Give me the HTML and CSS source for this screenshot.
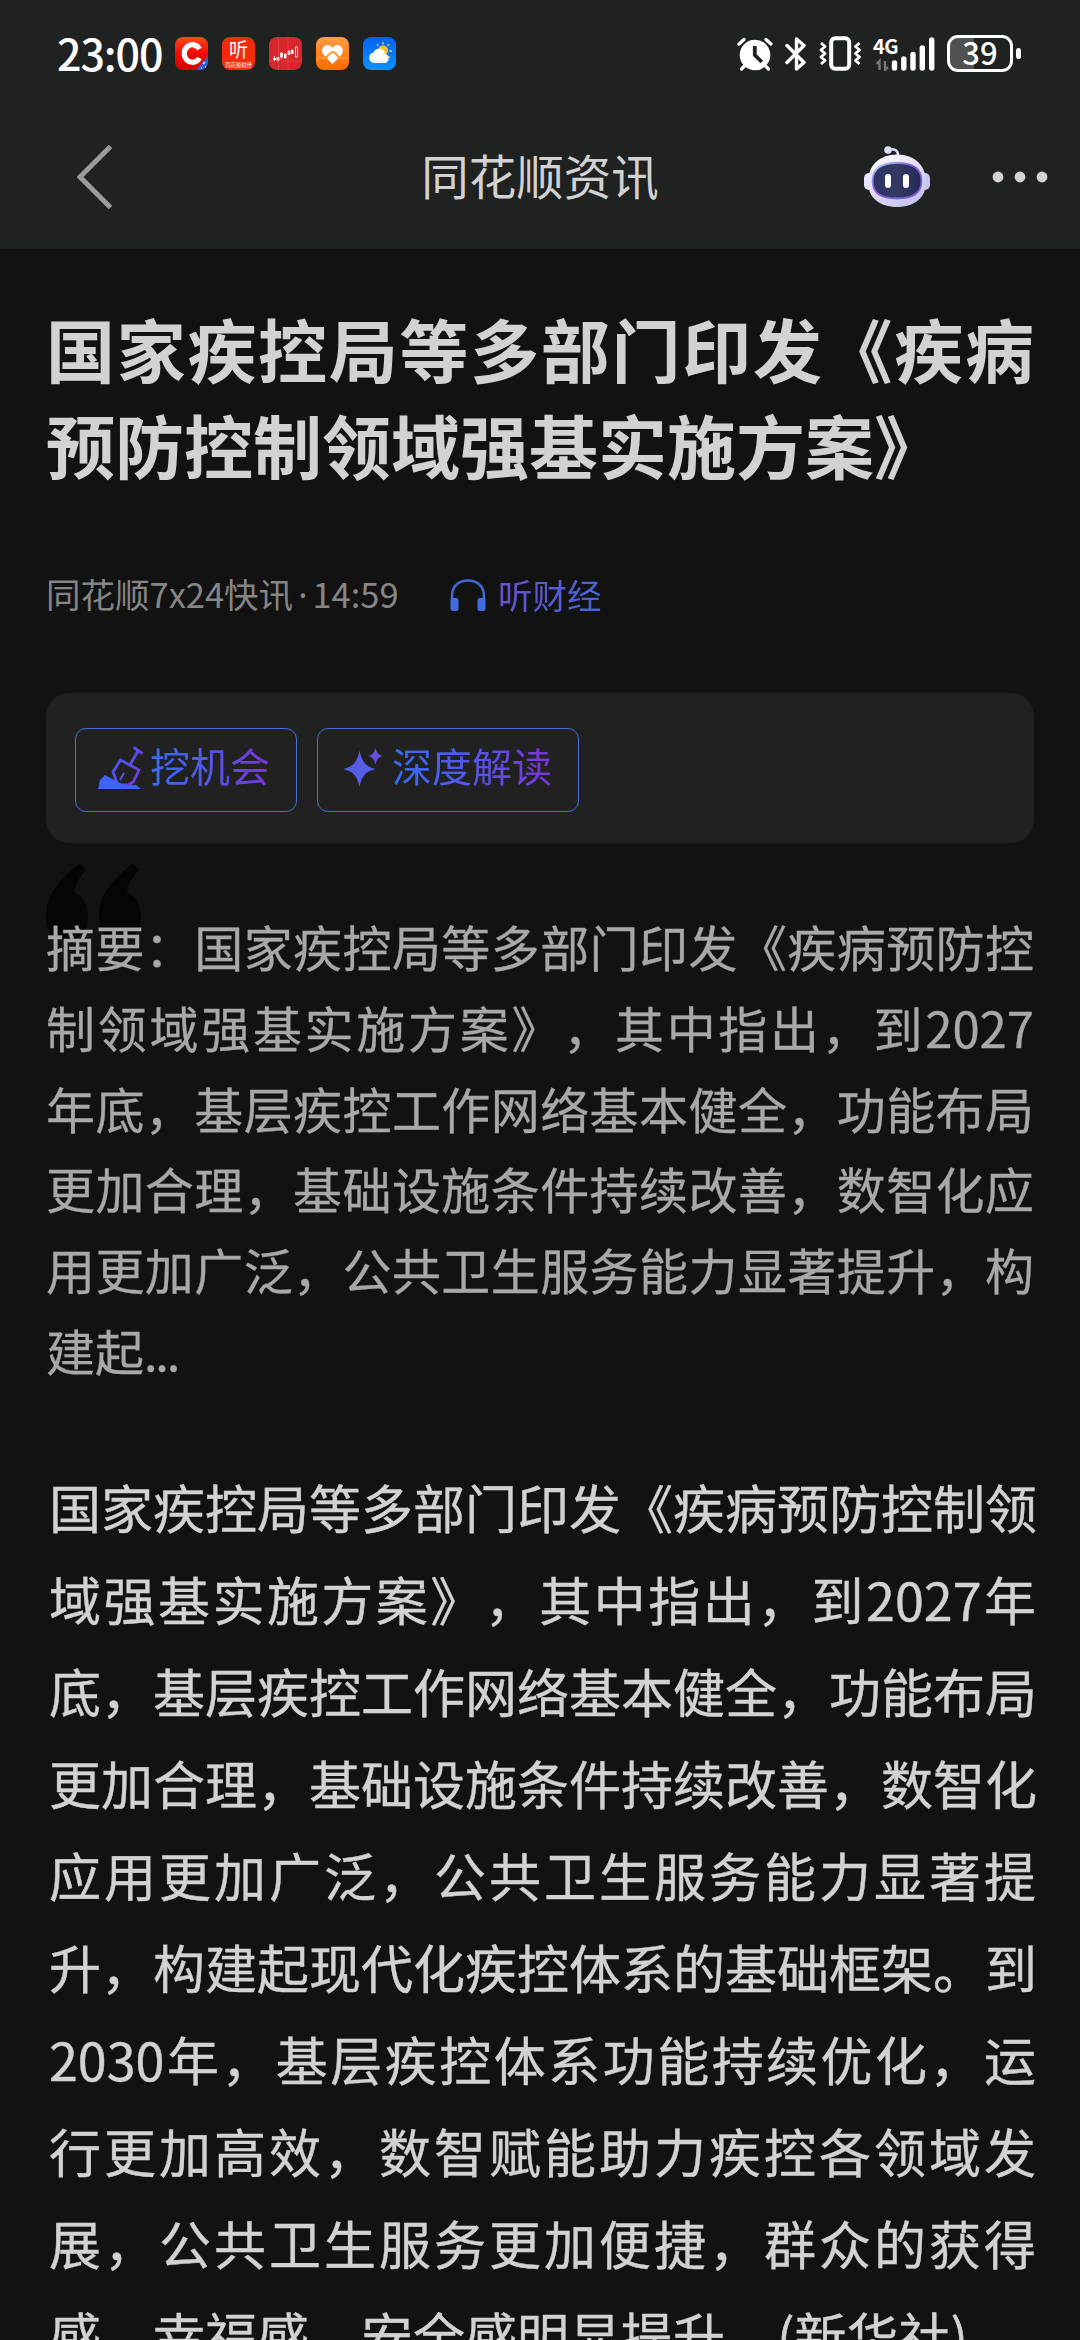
FILE: index.html
```html
<!DOCTYPE html>
<html lang="zh-CN">
<head>
    <meta charset="UTF-8">
    <meta name="viewport" content="width=device-width, initial-scale=1.0">
    <title>同花顺资讯</title>
    <link rel="stylesheet" href="styles.css">
</head>
<body>
    <header class="header">
        <div class="status-bar">
            <span class="time">23:00</span>
            <div class="apps">
                <svg viewBox="0 0 33 33">
                    <defs>
                        <linearGradient id="appRed" x1="0" y1="0" x2="0" y2="1"><stop offset="0" stop-color="#ff4a1c"/><stop offset=".5" stop-color="#f00a08"/><stop offset="1" stop-color="#d80000"/></linearGradient>
                        <clipPath id="appClip"><rect width="33" height="33" rx="8"/></clipPath>
                    </defs>
                    <g clip-path="url(#appClip)">
                        <rect width="33" height="33" fill="url(#appRed)"/>
                        <path d="M33 19V33H21Z" fill="#2f62d8"/>
                        <path d="M28 27l2-2M26 31h1M30 30h1" stroke="#cfe0ff" stroke-width="1.5"/>
                    </g>
                    <path d="M24.500 12A8.200 8.800 0 1 0 24.500 21" fill="none" stroke="#fff" stroke-width="5.200"/>
                </svg>
                <svg viewBox="0 0 33 33">
                    <rect width="33" height="33" rx="8" fill="#f02c0c"/>
                    <text class="ting" x="16.5" y="20">听</text>
                    <text class="ting-sub" x="16.5" y="29.5">同花顺财经</text>
                </svg>
                <svg viewBox="0 0 33 33">
                    <rect width="33" height="33" rx="8" fill="#d8262c"/>
                    <path d="M9.500 0v33M19 0v33M0 24h33" stroke="#e6484c" stroke-width=".6"/>
                    <path d="M5.500 19v5M9 20v4M12.500 15v7M16 16v6M20 13v5M23 12v5" stroke="#ffd9d6" stroke-width="1"/>
                    <path d="M4 21h3v2H4zM15 17h2.500v4H15zM22 13h2.500v4H22z" fill="#fff"/>
                    <path d="M8 20.500h2v2.500H8zM11.500 16h2v4h-2zM19 14.500h2v3h-2zM26.500 10h2v10h-2z" fill="none" stroke="#fff" stroke-width=".9"/>
                </svg>
                <svg viewBox="0 0 33 33">
                    <defs><linearGradient id="appOrange" x1="0" y1="0" x2="0" y2="1"><stop offset="0" stop-color="#ff9d45"/><stop offset="1" stop-color="#ff6a00"/></linearGradient></defs>
                    <rect width="33" height="33" rx="8" fill="url(#appOrange)"/>
                    <path d="M16.500 27L8 18.500C2 11 12 4 16.500 11C21 4 31 11 25 18.500Z" fill="#fff"/>
                    <path d="M0 22c6-4 7 1 10-1.500S14 15 17 15s4 5 7 6 5-1 9 0" fill="none" stroke="#ff9630" stroke-width="2"/>
                </svg>
                <svg viewBox="0 0 33 33">
                    <defs><linearGradient id="appBlue" x1="0" y1="0" x2="0" y2="1"><stop offset="0" stop-color="#0560f5"/><stop offset="1" stop-color="#0a94ff"/></linearGradient></defs>
                    <rect width="33" height="33" rx="8" fill="url(#appBlue)"/>
                    <path d="M20 5v2.500M14 7l1.200 2M26 7l-1.200 2M26.500 14h2.500M25 19l2 1.500" stroke="#ffd34a" stroke-width="1.300"/>
                    <circle cx="20" cy="13.500" r="5" fill="#ffc525"/>
                    <path d="M11 26a5.300 5.300 0 0 1-.5-10.500a6 6 0 0 1 11.500 1.500a4.600 4.600 0 0 1 0 9z" fill="#fff"/>
                </svg>
            </div>
            <div class="indicators">
                <svg width="36" height="34" viewBox="0 0 36 34">
                    <path d="M2 7l5-4.500M34 7l-5-4.500M8.500 28l-4 4M27.500 28l4 4" stroke="#fff" stroke-width="3.200" stroke-linecap="round"/>
                    <circle cx="18" cy="18" r="15.300" fill="#fff"/>
                    <path d="M17.800 9v9l7 7" fill="none" stroke="#202222" stroke-width="3.800"/>
                </svg>
                <svg class="bluetooth" width="22" height="34" viewBox="0 0 22 34">
                    <path d="M2 8.500l17 17-7.500 6.500V2l7.500 6.500-17 17" fill="none" stroke="#fff" stroke-width="3.400" stroke-linejoin="round" stroke-linecap="round"/>
                </svg>
                <svg class="vibrate" width="42" height="35" viewBox="0 0 42 35">
                    <rect x="12.200" y="2.200" width="18" height="30.500" rx="4" fill="none" stroke="#fff" stroke-width="4"/>
                    <path d="M2 7l4 3.500-4 3.500 4 3.500-4 3.500 4 3.500-4 3.500M40.500 7l-4 3.500 4 3.500-4 3.500 4 3.500-4 3.500 4 3.500" fill="none" stroke="#fff" stroke-width="2.800" stroke-linejoin="round"/>
                </svg>
                <div class="network">
                    <span>4G</span>
                    <svg width="62" height="34" viewBox="0 0 62 34">
                        <path d="M3.500 27l3-3v9M12 24v9l3-3" fill="none" stroke="#777978" stroke-width="2.400"/>
                        <path d="M21.500 26v5M30.800 22v9M40 17.500v13.500M49.300 11v20M58.700 3v28" stroke="#fff" stroke-width="5.400" stroke-linecap="round"/>
                    </svg>
                </div>
                <div class="battery">39</div>
            </div>
        </div>
        <nav class="nav-bar">
            <svg class="back" width="36" height="64" viewBox="0 0 36 64">
                <path d="M33.500 1.500L3 32l30.500 30.500" fill="none" stroke="#9a9b9b" stroke-width="5"/>
            </svg>
            <span class="nav-title">同花顺资讯</span>
            <div class="nav-actions">
                <svg width="66" height="62" viewBox="0 0 66 62">
                    <defs>
                        <linearGradient id="head" x1="0" y1="0" x2=".6" y2="1"><stop offset="0" stop-color="#fff"/><stop offset="1" stop-color="#c9c3ee"/></linearGradient>
                        <linearGradient id="rim" x1="0" y1="0" x2="1" y2="1"><stop offset="0" stop-color="#a7dcf5"/><stop offset=".45" stop-color="#8b50d8"/><stop offset=".75" stop-color="#6f6ce0"/><stop offset="1" stop-color="#8a47d0"/></linearGradient>
                        <linearGradient id="face" x1="0" y1="0" x2="1" y2="0"><stop offset="0" stop-color="#2b3266"/><stop offset=".5" stop-color="#343962"/><stop offset="1" stop-color="#242959"/></linearGradient>
                    </defs>
                    <circle cx="24" cy="4" r="3.800" fill="#e3e0f7"/>
                    <path d="M25 3.500c6-1 9 1 9 6" fill="none" stroke="#dedbf6" stroke-width="2.600"/>
                    <rect y="27" width="12" height="17" rx="5" fill="#e8e5fb"/>
                    <rect x="54" y="27" width="12" height="17" rx="5" fill="#c9c6f2"/>
                    <path d="M33 8.500C51 8.500 62 20 62 36C62 52 50 61 33 61S4 52 4 36C4 20 15 8.500 33 8.500Z" fill="url(#head)"/>
                    <path d="M33 17C49 17 57.500 23 57.500 35S49 52.500 33 52.500 8.500 47 8.500 35 17 17 33 17Z" fill="url(#face)" stroke="url(#rim)" stroke-width="1.800"/>
                    <rect x="21" y="28" width="6" height="14" rx="3" fill="#fff"/>
                    <rect x="39" y="28" width="6" height="14" rx="3" fill="#fff"/>
                </svg>
                <svg class="more" width="56" height="12" viewBox="0 0 56 12" fill="#d3d3d3">
                    <circle cx="6" cy="6" r="5.400"/><circle cx="28" cy="6" r="5.400"/><circle cx="50" cy="6" r="5.400"/>
                </svg>
            </div>
        </nav>
    </header>

    <main class="article">
        <h1 class="title">
            <span class="line full">国家疾控局等多部门印发《疾病</span>
            <span class="line">预防控制领域强基实施方案》</span>
        </h1>

        <div class="meta">
            <span class="source">同花顺7x24快讯<i>·</i>14:59</span>
            <svg width="36" height="33" viewBox="0 0 36 33">
                <path d="M2 23V17C2 7 9 1.500 18 1.500S34 7 34 17v6" fill="none" stroke="#3f68d2" stroke-width="2.600"/>
                <rect x="0.500" y="19" width="8" height="13" rx="2.500" fill="#426ce0"/>
                <rect x="27.500" y="19" width="8" height="13" rx="2.500" fill="#426ce0"/>
            </svg>
            <span class="listen">听财经</span>
        </div>

        <div class="tools">
            <button class="tool">
                <svg width="46" height="44" viewBox="0 0 46 44">
                    <defs><linearGradient id="dig" x1="0" y1="0" x2="1" y2="1"><stop offset="0" stop-color="#4160f5"/><stop offset="1" stop-color="#7737dc"/></linearGradient></defs>
                    <path d="M35.500 1.500l9 6M40 5l-7.500 13M22.500 14l18.500 10-5.500 11.500-5 3.500H20L15 26z" fill="none" stroke="url(#dig)" stroke-width="2.800"/>
                    <path d="M22 34l4-7" stroke="#5557ec" stroke-width="2"/>
                    <path d="M0 43l2-9 5-5 17 9 5 2 4-1h5l5 4z" fill="#3c64f6"/>
                </svg>
                <span>挖机会</span>
            </button>
            <button class="tool tool-read">
                <svg width="40" height="40" viewBox="0 0 40 40" fill="#555ce6">
                    <path d="M16.500 2.500C19 14 22 18 32.500 21C22 24 19 28 16.500 39C14 28 11 24 .5 21C11 18 14 14 16.500 2.500Z"/>
                    <path d="M32.500 0C34 5 35 6.500 39.500 8C35 9.500 34 11.500 32.500 16.500C31 11.500 30 9.500 25.500 8C30 6.500 31 5 32.500 0Z" fill="#6450dc"/>
                </svg>
                <span>深度解读</span>
            </button>
        </div>

        <section class="summary">
            <svg class="quote" width="96" height="78" viewBox="0 0 96 78" fill="#050505">
                <path id="mark" d="M34 0L40 7Q29 19 28 29C37 32 42 43 42 54C42 68 34 77 21 77C8 77 0 68 0 54C0 32 12 18 34 0Z"/>
                <use href="#mark" x="53"/>
            </svg>
            <p class="line full">摘要：国家疾控局等多部门印发《疾病预防控</p>
            <p class="line full">制领域强基实施方案》，其中指出，到2027</p>
            <p class="line full">年底，基层疾控工作网络基本健全，功能布局</p>
            <p class="line full">更加合理，基础设施条件持续改善，数智化应</p>
            <p class="line full">用更加广泛，公共卫生服务能力显著提升，构</p>
            <p class="line">建起<span class="dots">...</span></p>
        </section>

        <section class="content">
            <p class="line full">国家疾控局等多部门印发《疾病预防控制领</p>
            <p class="line full">域强基实施方案》，其中指出，到2027年</p>
            <p class="line full">底，基层疾控工作网络基本健全，功能布局</p>
            <p class="line full">更加合理，基础设施条件持续改善，数智化</p>
            <p class="line full">应用更加广泛，公共卫生服务能力显著提</p>
            <p class="line full">升，构建起现代化疾控体系的基础框架。到</p>
            <p class="line full">2030年，基层疾控体系功能持续优化，运</p>
            <p class="line full">行更加高效，数智赋能助力疾控各领域发</p>
            <p class="line full">展，公共卫生服务更加便捷，群众的获得</p>
            <p class="line">感、幸福感、安全感明显提升。(新华社)</p>
        </section>
    </main>
</body>
</html>
```
FILE: styles.css
```css
* {
    box-sizing: border-box;
}

body {
    margin: 0;
    height: 2340px;
    overflow: hidden;
    background-color: #121212;
    color: #d2d2d2;
    font-family: "Noto Sans CJK SC", sans-serif;
    text-spacing-trim: space-all;
    text-autospace: no-autospace;
}

svg {
    display: block;
    flex-shrink: 0;
}

/* Header */
.header {
    height: 249px;
    background-color: #202222;
}

.status-bar {
    display: flex;
    align-items: center;
    height: 107px;
    padding: 0 67px 0 57px;
    color: #fff;
}

.time {
    width: 118px;
    padding-bottom: 4px;
    font-size: 43px;
    font-weight: 500;
    line-height: 60px;
    letter-spacing: -1.1px;
}

.apps {
    display: flex;
    gap: 14px;
}

.apps svg {
    width: 33px;
    height: 33px;
}

.ting,
.ting-sub {
    fill: #fff;
    font-size: 19px;
    text-anchor: middle;
}

.ting-sub {
    font-size: 5.3px;
}

.indicators {
    display: flex;
    align-items: center;
    margin-left: auto;
}

.bluetooth {
    margin-left: 12px;
}

.vibrate {
    margin-left: 12px;
}

.network {
    position: relative;
    margin-left: 12px;
}

.network span {
    position: absolute;
    left: 0;
    top: -2px;
    font-size: 20px;
    font-weight: 700;
    line-height: 21px;
    letter-spacing: -0.5px;
}

.battery {
    position: relative;
    width: 66px;
    height: 37px;
    margin-left: 12px;
    border: 3px solid #fff;
    border-radius: 11px;
    background: linear-gradient(90deg, #505151 24px, transparent 24px);
    font-size: 31px;
    font-weight: 500;
    line-height: 28px;
    text-align: center;
}

.battery::after {
    content: "";
    position: absolute;
    right: -11px;
    top: 10px;
    width: 5px;
    height: 11px;
    border-radius: 3px;
    background-color: #fff;
}

.nav-bar {
    display: grid;
    grid-template-columns: 1fr auto 1fr;
    align-items: center;
    height: 140px;
    padding: 0 32px 0 77px;
}

.nav-title {
    margin: 0 45px 5px 0;
    font-size: 47.5px;
    line-height: 70px;
}

.nav-actions {
    display: flex;
    align-items: center;
    justify-content: flex-end;
    gap: 62px;
    margin-left: -45px;
}

/* Article */
.article {
    padding: 0 46px;
}

.line {
    display: block;
    margin: 0;
    white-space: nowrap;
}

.full {
    text-align: justify;
    text-align-last: justify;
}

.title {
    margin: 51px 0 0;
    font-size: 69px;
    font-weight: 700;
    line-height: 96px;
}

.meta {
    display: flex;
    align-items: center;
    height: 50px;
    margin-top: 78px;
    font-size: 34.5px;
    line-height: 50px;
}

.source {
    width: 404px;
    padding-bottom: 3px;
    color: #868686;
}

/* The CJK middle dot is full width, so take it from a Latin font */
.source i {
    font-family: "Noto Sans", sans-serif;
    font-style: normal;
    margin: 0 5px;
}

.listen {
    margin-left: 12px;
    padding-bottom: 3px;
    background: linear-gradient(90deg, #6b50cf, #4465dc);
    -webkit-background-clip: text;
    background-clip: text;
    color: transparent;
}

.tools {
    display: flex;
    gap: 20px;
    height: 150px;
    margin-top: 73px;
    padding: 35px 29px;
    border-radius: 23px;
    background-color: #212121;
}

.tool {
    display: flex;
    align-items: center;
    gap: 6px;
    width: 222px;
    height: 84px;
    padding: 0 0 5px 22px;
    border: 1.5px solid #456fd6;
    border-radius: 11px;
    background: none;
    font-family: inherit;
    font-size: 40px;
    line-height: 60px;
}

.tool-read {
    width: 262px;
    gap: 9px;
    padding-left: 25px;
}

.tool span {
    padding-bottom: 5px;
    background: linear-gradient(90deg, #366cf2, #5456ea 50%, #7c33dc);
    -webkit-background-clip: text;
    background-clip: text;
    color: transparent;
    white-space: nowrap;
}

.summary {
    position: relative;
    margin-top: 63px;
    color: #a8a8a8;
    font-size: 49px;
    line-height: 80.8px;
    -webkit-text-stroke: 0.3px;
}

.summary .line {
    position: relative;
}

.dots {
    letter-spacing: -2.3px;
}

/* Quote mark behind the first line */
.quote {
    position: absolute;
    left: 0;
    top: -43px;
}

.content {
    margin: 70px -2px 0 3px;
    font-size: 52px;
    line-height: 92px;
    -webkit-text-stroke: 0.4px;
}
```
